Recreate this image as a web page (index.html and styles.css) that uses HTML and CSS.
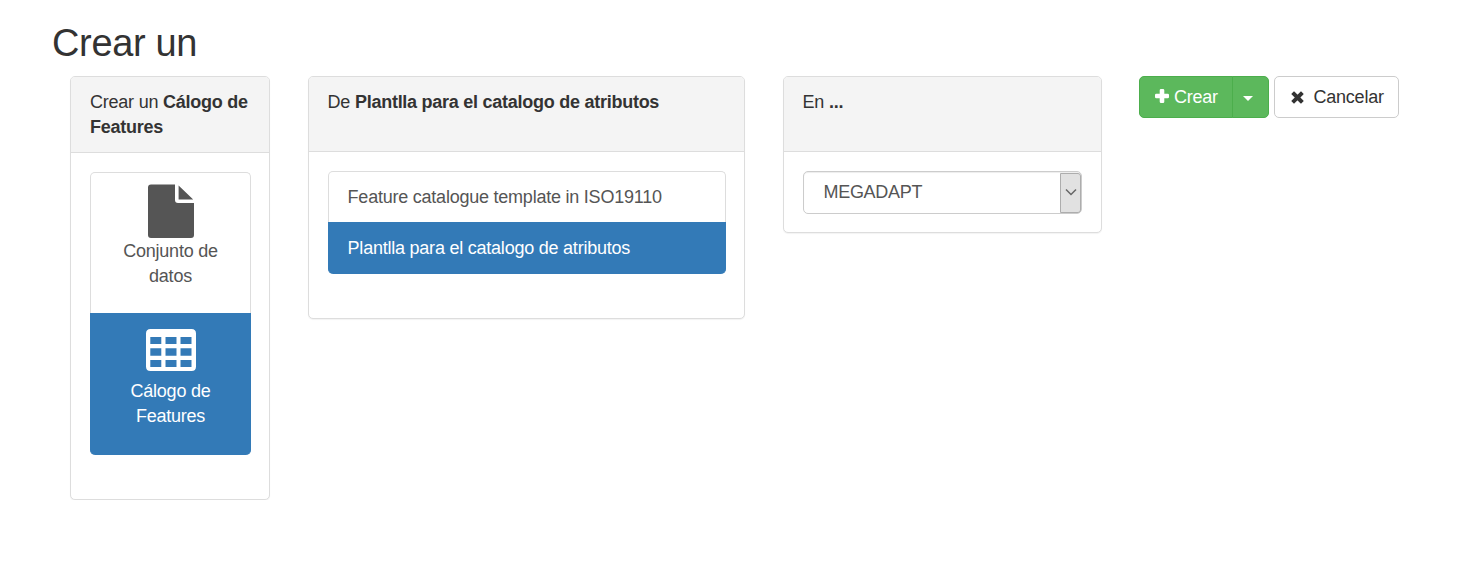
FILE: index.html
```html
<!DOCTYPE html>
<html lang="es">
<head>
<meta charset="utf-8">
<title>Crear un</title>
<link rel="stylesheet" href="styles.css">
</head>
<body>
<main class="page">
  <h1 class="title">Crear un</h1>
  <div class="row">
    <section class="panel panel-type">
      <header class="panel-heading">Crear un <strong>Cálogo de</strong><br><strong>Features</strong></header>
      <div class="panel-body">
        <div class="list-group">
          <a class="list-item type-item">
            <svg class="icon-file" viewBox="0 0 46 54"><path fill="currentColor" d="M3 0.4H27V16Q27 19 30 19H46V51Q46 54 43 54H3Q0 54 0 51V3.4Q0 .4 3 .4ZM30.6 1.4L45.2 15.6H30.6Z"/></svg>
            <span>Conjunto de datos</span>
          </a>
          <a class="list-item type-item active">
            <svg class="icon-table" viewBox="0 0 50 42"><path fill="currentColor" fill-rule="evenodd" d="M4.500 0h41Q50 0 50 4.500v33Q50 42 45.500 42h-41Q0 42 0 37.500v-33Q0 0 4.500 0ZM4.300 8v7h11V8ZM19.500 8v7h11V8ZM34.500 8v7h11V8ZM4.300 19.200v7.600h11v-7.600ZM19.500 19.200v7.600h11v-7.600ZM34.500 19.200v7.600h11v-7.600ZM4.300 31v7h11v-7ZM19.500 31v7h11v-7ZM34.500 31v7h11v-7Z"/></svg>
            <span>Cálogo de Features</span>
          </a>
        </div>
      </div>
    </section>
    <section class="panel panel-template">
      <header class="panel-heading">De <strong>Plantlla para el catalogo de atributos</strong></header>
      <div class="panel-body">
        <div class="list-group">
          <a class="list-item"><span>Feature catalogue template in ISO19110</span></a>
          <a class="list-item active"><span>Plantlla para el catalogo de atributos</span></a>
        </div>
      </div>
    </section>
    <section class="panel panel-group">
      <header class="panel-heading">En <strong>...</strong></header>
      <div class="panel-body">
        <div class="select">
          <span class="select-value">MEGADAPT</span>
          <span class="select-arrow"><svg viewBox="0 0 12 8"><path fill="none" stroke="#666" stroke-width="1.500" d="M1 1.500L6 6.500L11 1.500"/></svg></span>
        </div>
      </div>
    </section>
    <div class="actions">
      <div class="btn-group">
        <button class="btn btn-create"><svg class="icon-plus" viewBox="0 0 14 14"><path fill="currentColor" d="M6 0h2q1.300 0 1.300 1.300v3.400h3.400Q14 4.700 14 6v2q0 1.300-1.300 1.300H9.300v3.400Q9.300 14 8 14H6q-1.300 0-1.300-1.300V9.300H1.300Q0 9.300 0 8V6q0-1.300 1.300-1.300h3.400V1.300Q4.700 0 6 0Z"/></svg><span>Crear</span></button>
        <button class="btn btn-toggle" aria-label="Opciones"><i class="caret"></i></button>
      </div>
      <button class="btn btn-cancel"><svg class="icon-times" viewBox="0 0 13 13"><path stroke="currentColor" stroke-width="3.900" stroke-linecap="square" stroke-linejoin="round" d="M3 3L10 10M10 3L3 10"/></svg><span>Cancelar</span></button>
    </div>
  </div>
</main>
</body>
</html>
```

FILE: styles.css
```css
* { box-sizing: border-box; }
body {
  margin: 0;
  background: #fff;
  color: #333;
  font: 18px/25px "Liberation Sans", Arial, sans-serif;
  letter-spacing: -0.23px;
}
.page { padding: 22px 51px 0; }
.title {
  margin: 0 0 12px;
  padding-left: 1px;
  font-size: 38px;
  line-height: 42px;
  font-weight: 400;
  letter-spacing: -0.35px;
}
.row { display: flex; align-items: flex-start; padding-left: 19px; }
.panel {
  border: 1px solid #ddd;
  border-radius: 5px;
  background: #fff;
  box-shadow: 0 1px 1px rgba(0, 0, 0, .05);
}
.panel-type { width: 200px; height: 424px; margin-right: 38px; }
.panel-template { width: 437px; height: 243px; margin-right: 38px; }
.panel-group { width: 319px; height: 157px; margin-right: 37px; }
.panel-heading {
  height: 75px;
  padding: 13px 15px 0 18.6px;
  border-bottom: 1px solid #ddd;
  border-radius: 4px 4px 0 0;
  background: #f4f4f4;
}
.panel-type .panel-heading { height: 76px; padding-left: 19px; }
.panel-heading strong { letter-spacing: -0.26px; }
.panel-body { padding: 19px 18px 19px 19px; }
.list-group { display: flex; flex-direction: column; }
.list-item {
  height: 51px;
  padding: 13px 18.6px 0;
  border: 1px solid #ddd;
  border-bottom: 0;
  border-radius: 5px 5px 0 0;
  color: #555;
}
.list-item.active {
  height: 52px;
  border-color: #337ab7;
  border-radius: 0 0 5px 5px;
  background: #337ab7;
  color: #fff;
}
.type-item {
  display: flex;
  flex-direction: column;
  align-items: center;
  height: 141px;
  padding: 11px 19px 0;
  text-align: center;
}
.list-item.type-item.active { height: 142px; padding-top: 15px; }
.icon-file { width: 46px; height: 54px; margin-bottom: 1px; flex: none; }
.icon-table { width: 50px; height: 42px; margin-bottom: 8px; flex: none; }
.select {
  display: flex;
  width: 279px;
  height: 43px;
  border: 1px solid #ccc;
  border-radius: 5px;
  box-shadow: inset 0 1px 1px rgba(0, 0, 0, .075);
  color: #555;
}
.select-value { flex: 1; padding: 8px 0 0 19.5px; letter-spacing: -0.3px; }
.select-arrow {
  display: flex;
  align-items: center;
  justify-content: center;
  width: 21px;
  height: 40px;
  margin-top: 1px;
  border: 1px solid #adadad;
  border-radius: 0 3px 3px 0;
  background: #e1e1e1;
}
.select-arrow svg { width: 12px; height: 8px; margin-bottom: 2px; }
.actions { display: flex; gap: 5px; }
.btn-group { display: flex; }
.btn {
  display: flex;
  align-items: center;
  height: 42px;
  padding: 0;
  border: 1px solid #ccc;
  border-radius: 5px;
  background: #fff;
  color: #333;
  font: inherit;
  letter-spacing: inherit;
}
.btn-create {
  width: 94px;
  padding-left: 15px;
  border-color: #4cae4c;
  border-radius: 5px 0 0 5px;
  background: #5cb85c;
  color: #fff;
}
.btn-toggle {
  width: 37px;
  margin-left: -1px;
  padding-left: 10px;
  border-color: #4cae4c;
  border-radius: 0 5px 5px 0;
  background: #5cb85c;
}
.caret {
  margin-top: 3px;
  border: 5px solid transparent;
  border-top-color: #fff;
  border-bottom: 0;
}
.btn-cancel { width: 125px; padding-left: 15.5px; }
.icon-plus { width: 14px; height: 14px; margin: 0 5px 2px 0; }
.icon-times { width: 13px; height: 13px; margin-right: 10px; }
```
